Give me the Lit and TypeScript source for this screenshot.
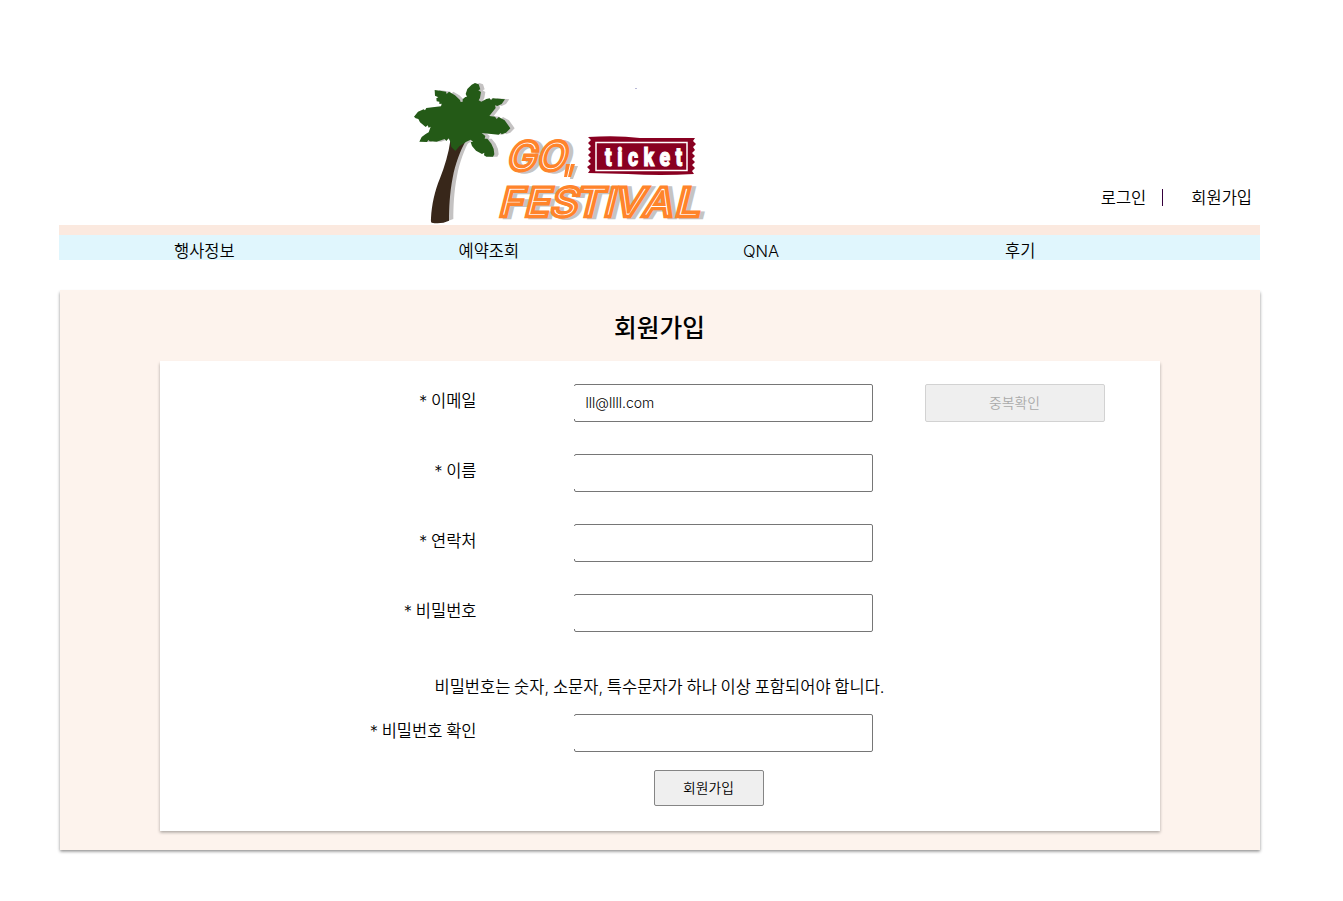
import { LitElement, html, css, svg } from "lit";
import { customElement } from "lit/decorators.js";

interface Letter { c: string; x: number; w: number; y: number }

const LETTERS: Letter[] = [
  { c: "G", x: 506, w: 29, y: 169.5 },
  { c: "O", x: 536, w: 29, y: 169.5 },
  { c: "F", x: 498, w: 24, y: 215.5 },
  { c: "E", x: 523.5, w: 25, y: 215.5 },
  { c: "S", x: 549, w: 27, y: 215.5 },
  { c: "T", x: 574, w: 28, y: 215.5 },
  { c: "I", x: 603, w: 10, y: 215.5 },
  { c: "V", x: 613, w: 29, y: 215.5 },
  { c: "A", x: 642, w: 29, y: 215.5 },
  { c: "L", x: 674, w: 25, y: 215.5 },
];

@customElement("festival-logo")
export class FestivalLogo extends LitElement {
  static styles = css`
    :host { display: block; width: 320px; height: 150px; }
    svg { display: block; overflow: visible; }
    .neon { font-family: Inter, sans-serif; font-weight: 400; font-size: 39px; stroke-linejoin: miter; stroke-miterlimit: 2; }
    .shade { fill: #c4c4c4; stroke: #c4c4c4; stroke-width: 4.6px; }
    .tube { fill: #ff842b; stroke: #ff842b; stroke-width: 4.4px; }
    .inline { fill: #fff; stroke: #ff842b; stroke-width: 2.4px; }
    .stamp { font-family: "Roboto", sans-serif; font-weight: 900; font-size: 25px; fill: #fff; stroke: #fff; stroke-width: 1px; }
  `;

  private word(cls: string, dx = 0, dy = 0) {
    return svg`<g class="neon ${cls}">${LETTERS.map(
      (l) => svg`<text transform="translate(${l.x + dx} ${l.y + dy}) skewX(-14)" textLength=${l.w} lengthAdjust="spacingAndGlyphs">${l.c}</text>`
    )}</g>`;
  }

  render() {
    return html`<svg width="320" height="150" viewBox="410 75 320 150" role="img" aria-label="GO, FESTIVAL ticket">
      <defs>
        <path id="leaves" d="M136 200 L131 190 L124 198 L119 192 L95 200 L74 199 L70 195 L66 201 L43 200 L50 186 L62 177 L71 172 L77 155 L71 158 L68 151 L62 156 L45 142 L40 132 L32 130 L27 125 L39 110 L56 103 L60 106 L64 99 L108 94 L110 86 L103 87 L103 80 L95 79 L94 70 L100 67 L90 62 L89 45 L105 47 L123 50 L125 57 L132 50 L150 61 L165 75 L167 81 L173 80 L173 73 L181 66 L186 65 L182 57 L187 42 L200 29 L210 24 L221 28 L226 43 L220 46 L228 51 L225 69 L221 76 L229 80 L244 72 L254 70 L258 76 L263 70 L300 73 L290 87 L277 93 L270 91 L272 99 L253 123 L270 125 L275 132 L281 126 L299 136 L316 160 L303 173 L290 178 L287 174 L281 179 L230 174 L241 183 L239 191 L247 191 L259 206 L266 222 L268 238 L264 245 L244 245 L237 241 L238 233 L231 237 L213 227 L201 213 L197 201 L204 200 L197 194 L184 200 L163 214 L151 228 L139 216 Z"/>
        <path id="trunk" d="M136 197 L182 198 C165 229 151 266 143 308 C134 355 132 400 132 437 Q109 448 80 443 Q77 443 78 430 C80 390 89 348 105 310 C119 274 131 235 136 197 Z"/>
      </defs>
      <g transform="translate(405 75) scale(.33333)">
        <g fill="#c4c2c2" transform="translate(13 0)"><use href="#trunk" y="-5"/><use href="#leaves" y="0"/></g>
        <use href="#trunk" fill="#38271a"/>
        <use href="#leaves" fill="#245a17"/>
      </g>
      <path d="M635 88.500h2" stroke="#b8b8d8" stroke-width="1"/>
      ${this.word("shade", 4, 1.5)}
      <path d="M571 166h7l-5 13h-3z" fill="#c4c4c4"/>
      ${this.word("tube")}
      ${this.word("inline")}
      <path d="M566 164h4l-3 13h-3zM571 164h4l-4 13h-3z" fill="#ff842b"/>
      <path d="M588 137 Q617 135 640 138 L695 138 L693 141 L696 144 L693 147 L695 150 L692 153 L695 156 L692 159 L695 162 L692 165 L695 168 L692 171 L694 174 Q660 176 628 174 L588 173 L590 170 L587 167 L591 164 L588 161 L591 158 L588 155 L591 152 L588 149 L591 146 L588 143 L591 140 Z" fill="#890021"/>
      <rect x="596" y="142.500" width="91" height="28" fill="none" stroke="#fff" stroke-width="1.500"/>
      <text class="stamp" transform="translate(605 165.500) scale(.78 1)" textLength="99" lengthAdjust="spacing">ticket</text>
    </svg>`;
  }
}

@customElement("form-row")
export class FormRow extends LitElement {
  static properties = { label: {}, value: {}, type: {} };
  declare label: string;
  declare value: string;
  declare type: string;

  static styles = css`
    :host { display: grid; grid-template-columns: 317px 299px 180px; column-gap: 0; height: 38px; align-items: start; }
    .label { text-align: right; line-height: 24px; padding-top: 5px; white-space: nowrap; }
    .field { position: relative; margin-left: 97px; width: 300px; height: 38px; }
    .field::before { content: ""; position: absolute; left: 0; top: 2px; width: 1px; height: 33px; background: #fff; }
    .input { box-sizing: border-box; width: 299px; height: 38px; border: 1px solid #767676; border-radius: 2px; padding: 0 11px 1px; background: #fff; color: #000; font: inherit; font-size: 14px; outline: none; display: block; }
    .action { margin-left: 149px; }
  `;

  render() {
    return html`<div class="label">* ${this.label}</div>
      <div class="field"><input class="input" type=${this.type || "text"} aria-label=${this.label} .value=${this.value || ""}></div>
      <div class="action"><slot></slot></div>`;
  }
}

@customElement("app-root")
export class AppRoot extends LitElement {
  static styles = css`
    :host { display: block; box-sizing: border-box; min-height: 901px; background: #fff; color: #000; padding-left: 59px; font-family: Inter, "Noto Sans CJK KR", sans-serif; font-weight: 350; font-size: 16.5px; line-height: 24px; word-spacing: -.9px; }
    .page { width: 1201px; }
    .header { box-sizing: border-box; height: 225px; padding: 75px 8px 0 351px; display: flex; justify-content: space-between; }
    .account { display: flex; padding-top: 111px; white-space: nowrap; }
    .bar { width: 1px; height: 17px; margin: 3px 28px 0 16px; background: #35003c; }
    .nav { box-sizing: border-box; height: 35px; border-top: 10px solid #fbe9df; background: #e0f6fd; display: flex; padding: 4px 0 0 115px; }
    .nav a { flex: 0 0 284.500px; }
    .nav a:nth-child(3) { flex-basis: 262px; }
    .panel { box-sizing: border-box; width: 1200px; height: 560px; margin: 30px 0 0 .5px; padding: 20px 100px; background: #fdf3ed; box-shadow: 0 1.5px 3px rgba(0,0,0,.45); }
    .title { margin: 0; height: 51px; line-height: 37px; font-size: 24.7px; font-weight: 500; text-align: center; }
    .card { box-sizing: border-box; height: 470px; background: #fff; box-shadow: 0 1.5px 3px rgba(0,0,0,.33); padding-top: 23px; }
    .rows { display: grid; row-gap: 32px; }
    .hint { margin: 43px 0 15px; text-align: center; }
    .button { box-sizing: border-box; display: block; border: 1px solid #858585; border-radius: 2px; background: #efefef; color: #000; font: inherit; font-size: 13.8px; padding: 0; }
    .check { width: 180px; height: 38px; color: #aaa; border-color: #d2d2d2; padding-bottom: 1px; }
    .submit { width: 110px; height: 36px; margin: 18px 0 0 494px; }
  `;

  render() {
    return html`<div class="page">
      <header class="header">
        <festival-logo></festival-logo>
        <div class="account"><span>로그인</span><span class="bar"></span><span>회원가입</span></div>
      </header>
      <nav class="nav"><a>행사정보</a><a>예약조회</a><a>QNA</a><a>후기</a></nav>
      <main class="panel">
        <h2 class="title">회원가입</h2>
        <section class="card">
          <div class="rows">
            <form-row label="이메일" value="lll@llll.com"><button class="button check" disabled>중복확인</button></form-row>
            <form-row label="이름"></form-row>
            <form-row label="연락처"></form-row>
            <form-row label="비밀번호" type="password"></form-row>
          </div>
          <p class="hint">비밀번호는 숫자, 소문자, 특수문자가 하나 이상 포함되어야 합니다.</p>
          <form-row label="비밀번호 확인" type="password"></form-row>
          <button class="button submit">회원가입</button>
        </section>
      </main>
    </div>`;
  }
}
